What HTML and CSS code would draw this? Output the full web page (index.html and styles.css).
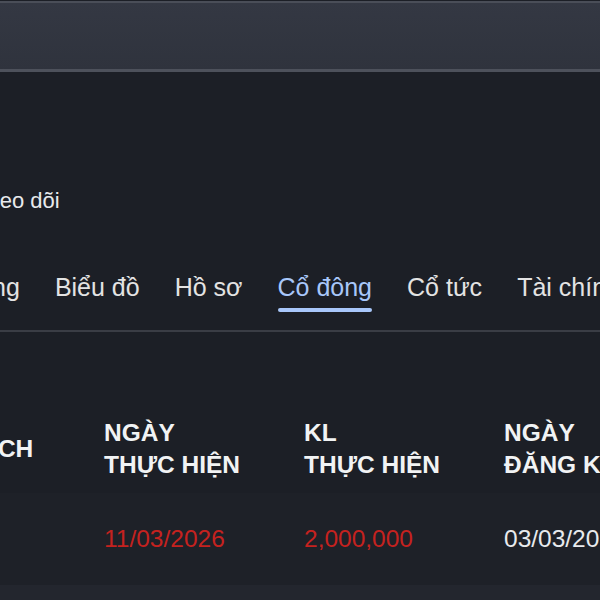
FILE: index.html
```html
<!DOCTYPE html>
<html lang="vi">
<head>
<meta charset="utf-8">
<link rel="stylesheet" href="styles.css">
</head>
<body>
<header class="topbar"></header>
<main class="stock">
  <div class="follow"><span class="follow-text">Theo dõi</span></div>
  <nav class="tabs">
    <div class="tab">Thị trường</div>
    <div class="tab">Biểu đồ</div>
    <div class="tab">Hồ sơ</div>
    <div class="tab active">Cổ đông</div>
    <div class="tab">Cổ tức</div>
    <div class="tab">Tài chính</div>
  </nav>
  <section class="table-wrap">
    <div class="table">
      <div class="row head">
        <div class="cell">GIAO DỊCH</div>
        <div class="cell">NGÀY<br>THỰC HIỆN</div>
        <div class="cell">KL<br>THỰC HIỆN</div>
        <div class="cell">NGÀY<br>ĐĂNG KÝ</div>
      </div>
      <div class="row data">
        <div class="cell">Bán</div>
        <div class="cell red">11/03/2026</div>
        <div class="cell red">2,000,000</div>
        <div class="cell">03/03/2026</div>
      </div>
      <div class="row data alt">
        <div class="cell">&nbsp;</div>
        <div class="cell">&nbsp;</div>
        <div class="cell">&nbsp;</div>
        <div class="cell">&nbsp;</div>
      </div>
    </div>
  </section>
</main>
</body>
</html>
```

FILE: styles.css
```css
html, body {
  margin: 0;
  padding: 0;
  background: #1c1f26;
  overflow: hidden;
}
body {
  font-family: "Liberation Sans", Arial, sans-serif;
  color: #e8eaed;
  width: 600px;
  height: 600px;
}
.topbar {
  margin-top: 1px;
  height: 66px;
  background: linear-gradient(#343843, #2f333d);
  border-top: 2px solid #4a4e58;
  border-bottom: 3px solid #4d515b;
}
.stock {
  display: flex;
  flex-direction: column;
}
.follow {
  margin-top: 114px;
  margin-left: -26px;
  font-size: 22px;
  line-height: 30px;
  white-space: nowrap;
}
.tabs {
  display: flex;
  gap: 35px;
  margin-top: 55px;
  margin-left: -98px;
  padding-bottom: 18px;
  border-bottom: 2px solid #3a3d45;
  white-space: nowrap;
  width: 800px;
}
.tab {
  display: flex;
  flex-direction: column;
  font-size: 25px;
  line-height: 32px;
  color: #e3e3e3;
}
.tab::after {
  content: "";
  display: block;
  height: 4px;
  margin-top: 5px;
  border-radius: 2px;
  background: transparent;
}
.tab.active {
  color: #a8c7fa;
}
.tab.active::after {
  background: #a8c7fa;
}
.table-wrap {
  padding-top: 73px;
}
.table {
  display: flex;
  flex-direction: column;
  margin-left: -112px;
  width: 800px;
}
.row {
  display: grid;
  grid-template-columns: repeat(4, 200px);
  align-items: center;
}
.cell {
  padding: 0 16px;
  font-size: 24.5px;
  line-height: 32px;
  white-space: nowrap;
}
.row.head {
  padding: 12px 0;
}
.row.head .cell {
  font-weight: bold;
  color: #f1f3f4;
}
.row.data {
  background: #1e2128;
  height: 92px;
}
.row.data.alt {
  background: #23262e;
}
.red {
  color: #c5221f;
}
```
